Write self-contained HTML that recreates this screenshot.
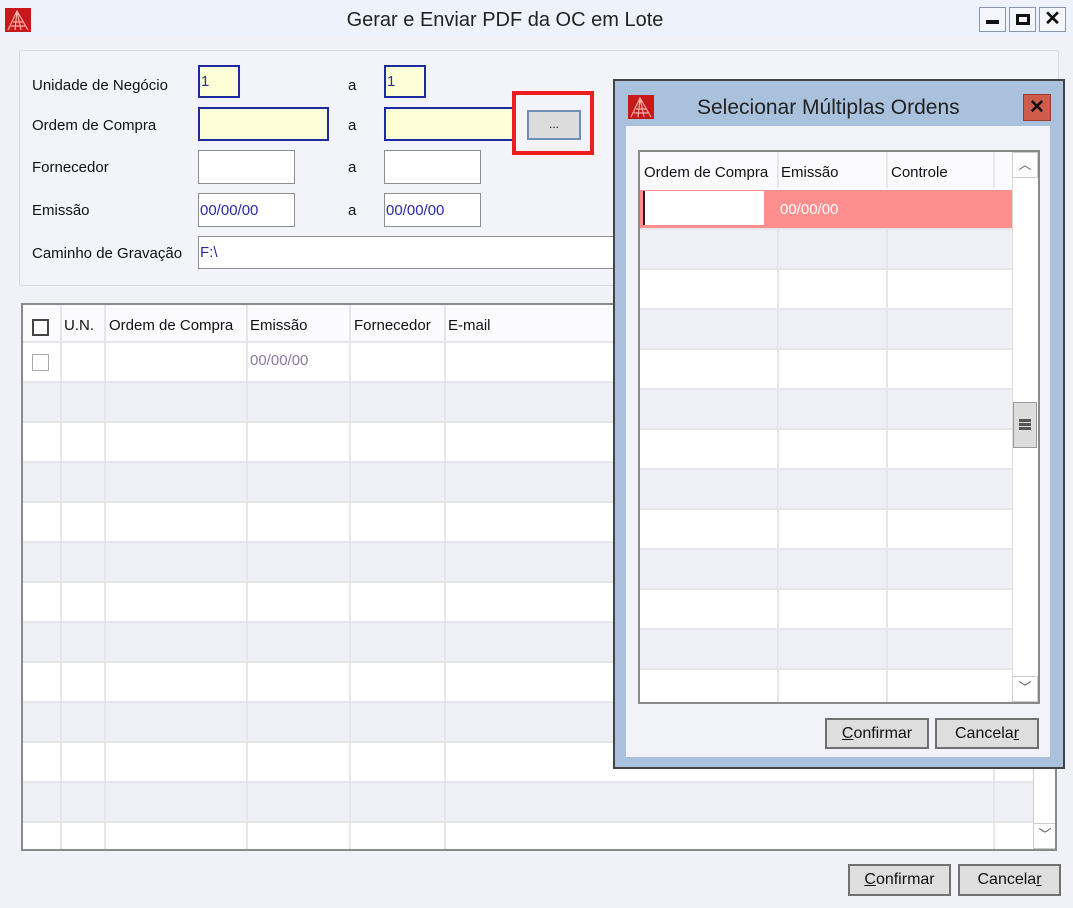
<!DOCTYPE html>
<html><head><meta charset="utf-8"><style>
*{box-sizing:border-box;margin:0;padding:0}
body{width:1073px;height:908px;background:#f0f2f8;font-family:"Liberation Sans",sans-serif;font-size:15px;color:#111;position:relative;overflow:hidden}
.a{position:absolute}
.lbl{position:absolute;font-size:15px}
.inp{position:absolute;border:1px solid #8e8e8e;background:#fff;font-size:15px;color:#2a2aa8;padding:0 1px;display:flex;align-items:center}
.y{background:#fdfdd6;border:2px solid #1c2ba0}
.btn{position:absolute;background:#dedede;border:2px solid #707070;font-size:16px;text-align:center;line-height:27px}
.grid{position:absolute;background:#fff;border:2px solid #8a8a8a;overflow:hidden}
.row{position:absolute;left:0;right:0;border-bottom:2px solid #e6e6ea}
.vl{position:absolute;top:0;bottom:0;width:2px;background:#e6e6ea}
.hd{position:absolute;font-size:15px;top:12px}
</style></head><body>
<div class="a" style="left:0;top:0;width:1073px;height:38px;background:#eef2fb"></div>
<svg class="a" style="left:5px;top:8px" width="26" height="24"><rect width="26" height="24" fill="#c8181b"/><path d="M3 22 L12 3 L23 22 M8 14 L18 14 M6 18 L20 18 M12 3 L10 22 M12 3 L16 22" stroke="#f6b0a8" stroke-width="1.2" fill="none"/></svg>
<div class="a" style="left:0;width:1010px;top:9px;text-align:center;font-size:20px;color:#222">Gerar e Enviar PDF da OC em Lote</div>
<div class="a" style="left:979px;top:7px;width:27px;height:25px;border:1px solid #8a96b0;background:#f4f6fb"><div class="a" style="left:6px;top:12px;width:13px;height:4px;background:#111"></div></div>
<div class="a" style="left:1009px;top:7px;width:27px;height:25px;border:1px solid #8a96b0;background:#f4f6fb"><div class="a" style="left:6px;top:6px;width:14px;height:11px;border:3px solid #111"></div></div>
<div class="a" style="left:1039px;top:7px;width:27px;height:25px;border:1px solid #8a96b0;background:#f4f6fb;font-weight:bold;font-size:20px;text-align:center;line-height:22px">✕</div>
<div class="a" style="left:19px;top:50px;width:1040px;height:236px;border:1px solid #d6dae4;border-radius:3px;background:#f2f4f9"></div>
<div class="lbl" style="left:32px;top:77px">Unidade de Negócio</div>
<div class="lbl" style="left:32px;top:117px">Ordem de Compra</div>
<div class="lbl" style="left:32px;top:159px">Fornecedor</div>
<div class="lbl" style="left:32px;top:202px">Emissão</div>
<div class="lbl" style="left:32px;top:245px">Caminho de Gravação</div>
<div class="lbl" style="left:348px;top:77px">a</div><div class="lbl" style="left:348px;top:117px">a</div><div class="lbl" style="left:348px;top:159px">a</div><div class="lbl" style="left:348px;top:202px">a</div>
<div class="inp y" style="left:198px;top:65px;width:42px;height:33px">1</div>
<div class="inp y" style="left:384px;top:65px;width:42px;height:33px">1</div>
<div class="inp y" style="left:198px;top:107px;width:131px;height:34px"></div>
<div class="inp y" style="left:384px;top:107px;width:140px;height:34px"></div>
<div class="inp" style="left:198px;top:150px;width:97px;height:34px"></div>
<div class="inp" style="left:384px;top:150px;width:97px;height:34px"></div>
<div class="inp" style="left:198px;top:193px;width:97px;height:34px">00/00/00</div>
<div class="inp" style="left:384px;top:193px;width:97px;height:34px">00/00/00</div>
<div class="inp" style="left:198px;top:236px;width:430px;height:33px">F:\</div>
<div class="a" style="left:512px;top:91px;width:82px;height:64px;border:4px solid #ee1c1c;background:#f2f4f9"></div>
<div class="a" style="left:527px;top:110px;width:54px;height:30px;background:#dcdcdc;border:2px solid #6f8fb4;text-align:center;font-size:12px;line-height:24px">...</div>
<div class="grid" style="left:21px;top:303px;width:1036px;height:548px">
 <div class="row" style="top:0;height:38px;background:#fbfbfd"></div>
 <div class="row" style="top:38px;height:40px;background:#fff"></div>
 <div class="row" style="top:78px;height:40px;background:#eff0f5"></div>
 <div class="row" style="top:118px;height:40px;background:#fff"></div>
 <div class="row" style="top:158px;height:40px;background:#eff0f5"></div>
 <div class="row" style="top:198px;height:40px;background:#fff"></div>
 <div class="row" style="top:238px;height:40px;background:#eff0f5"></div>
 <div class="row" style="top:278px;height:40px;background:#fff"></div>
 <div class="row" style="top:318px;height:40px;background:#eff0f5"></div>
 <div class="row" style="top:358px;height:40px;background:#fff"></div>
 <div class="row" style="top:398px;height:40px;background:#eff0f5"></div>
 <div class="row" style="top:438px;height:40px;background:#fff"></div>
 <div class="row" style="top:478px;height:40px;background:#eff0f5"></div>
 <div class="row" style="top:518px;height:40px;background:#fff;border:0"></div>
 <div class="vl" style="left:37px"></div><div class="vl" style="left:81px"></div><div class="vl" style="left:223px"></div><div class="vl" style="left:326px"></div><div class="vl" style="left:421px"></div><div class="vl" style="left:970px"></div>
 <div class="a" style="left:9px;top:14px;width:17px;height:17px;border:2px solid #444;background:#fff"></div>
 <div class="a" style="left:9px;top:49px;width:17px;height:17px;border:1px solid #aaa;background:#fff"></div>
 <div class="hd" style="left:41px">U.N.</div><div class="hd" style="left:86px">Ordem de Compra</div><div class="hd" style="left:227px">Emissão</div><div class="hd" style="left:331px">Fornecedor</div><div class="hd" style="left:425px">E-mail</div>
 <div class="hd" style="left:227px;top:47px;color:#8a7aa0">00/00/00</div>
 <div class="a" style="left:1010px;top:0;bottom:0;width:24px;background:#fff;border-left:1px solid #ccc"></div>
 <div class="a" style="left:1010px;top:518px;width:24px;height:26px;border:1px solid #ccc;text-align:center;font-size:13px;color:#555">﹀</div>
</div>
<div class="btn" style="left:848px;top:864px;width:103px;height:32px"><u>C</u>onfirmar</div>
<div class="btn" style="left:958px;top:864px;width:103px;height:32px">Cancela<u>r</u></div>
<div class="a" style="left:613px;top:79px;width:452px;height:690px;background:#a9c1dc;border:2px solid #444"></div>
<svg class="a" style="left:628px;top:95px" width="26" height="24"><rect width="26" height="24" fill="#c8181b"/><path d="M3 22 L12 3 L23 22 M8 14 L18 14 M6 18 L20 18 M12 3 L10 22 M12 3 L16 22" stroke="#f6b0a8" stroke-width="1.2" fill="none"/></svg>
<div class="a" style="left:697px;top:96px;font-size:21px;color:#222">Selecionar Múltiplas Ordens</div>
<div class="a" style="left:1023px;top:94px;width:28px;height:27px;background:#cf5c4b;border:1px solid #9a3b30;text-align:center;font-weight:bold;font-size:19px;line-height:25px;color:#111">✕</div>
<div class="a" style="left:626px;top:126px;width:424px;height:631px;background:#f1f3f9"></div>
<div class="grid" style="left:638px;top:150px;width:402px;height:554px">
 <div class="row" style="top:0;height:38px;background:#fbfbfd;border:0"></div>
 <div class="row" style="top:38px;height:40px;background:#ff8f8f"></div>
 <div class="row" style="top:78px;height:40px;background:#eff0f5"></div>
 <div class="row" style="top:118px;height:40px;background:#fff"></div>
 <div class="row" style="top:158px;height:40px;background:#eff0f5"></div>
 <div class="row" style="top:198px;height:40px;background:#fff"></div>
 <div class="row" style="top:238px;height:40px;background:#eff0f5"></div>
 <div class="row" style="top:278px;height:40px;background:#fff"></div>
 <div class="row" style="top:318px;height:40px;background:#eff0f5"></div>
 <div class="row" style="top:358px;height:40px;background:#fff"></div>
 <div class="row" style="top:398px;height:40px;background:#eff0f5"></div>
 <div class="row" style="top:438px;height:40px;background:#fff"></div>
 <div class="row" style="top:478px;height:40px;background:#eff0f5"></div>
 <div class="row" style="top:518px;height:40px;background:#fff;border:0"></div>
 <div class="vl" style="left:137px;top:78px"></div><div class="vl" style="left:246px;top:78px"></div>
 <div class="vl" style="left:137px;height:36px;background:#e8e8ec"></div><div class="vl" style="left:246px;height:36px;background:#e8e8ec"></div><div class="vl" style="left:353px;height:36px;background:#e8e8ec"></div>
 <div class="hd" style="left:4px">Ordem de Compra</div><div class="hd" style="left:141px">Emissão</div><div class="hd" style="left:251px">Controle</div>
 <div class="a" style="left:3px;top:39px;width:121px;height:34px;background:#fff;border-left:2px solid #222"></div>
 <div class="hd" style="left:140px;top:49px;color:#fff">00/00/00</div>
 <div class="a" style="left:372px;top:0;bottom:0;width:26px;background:#fff;border-left:1px solid #ddd"></div>
 <div class="a" style="left:372px;top:0;width:26px;height:26px;border:1px solid #ccc;text-align:center;font-size:13px;color:#555;line-height:24px">︿</div>
 <div class="a" style="left:373px;top:250px;width:24px;height:46px;background:#dcdcdc;border:1px solid #999"><div class="a" style="left:5px;top:16px;width:12px;height:11px;border-top:3px solid #555;border-bottom:3px solid #555"></div><div class="a" style="left:5px;top:20px;width:12px;height:3px;background:#555"></div></div>
 <div class="a" style="left:372px;top:524px;width:26px;height:26px;border:1px solid #ccc;text-align:center;font-size:13px;color:#555">﹀</div>
</div>
<div class="btn" style="left:825px;top:718px;width:104px;height:31px"><u>C</u>onfirmar</div>
<div class="btn" style="left:935px;top:718px;width:104px;height:31px">Cancela<u>r</u></div>
</body></html>
